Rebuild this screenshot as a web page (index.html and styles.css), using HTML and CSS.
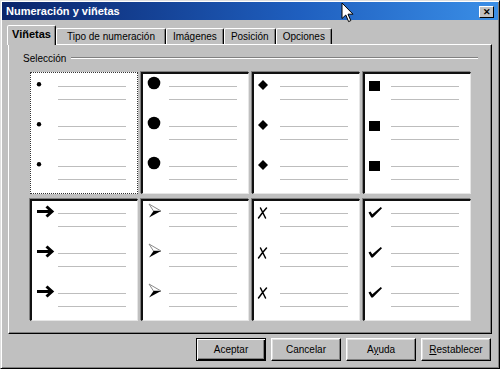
FILE: index.html
```html
<!doctype html>
<html>
<head>
	<title>Numeración y viñetas</title>
	<meta charset="utf-8">
	<link rel="stylesheet" href="styles.css">
</head>
<body>
	<!-- Symbole fuer die Aufzaehlungszeichen -->
	<svg class="defs" width="0" height="0">
		<symbol id="punto" viewBox="0 0 26 24"><circle cx="7" cy="10.3" r="2.2"/></symbol>
		<symbol id="circulo" viewBox="0 0 26 24"><circle cx="11" cy="9" r="6.3"/></symbol>
		<symbol id="rombo" viewBox="0 0 26 24"><path d="M9 6 L14 11 L9 16 L4 11 Z"/></symbol>
		<symbol id="cuadro" viewBox="0 0 26 24"><rect x="4" y="7" width="11" height="10"/></symbol>
		<symbol id="flecha" viewBox="0 0 26 24"><path d="M5 10.5 H19 M14.5 5.5 L20 10.5 L14.5 15.5" fill="none" stroke="#000" stroke-width="3"/></symbol>
		<symbol id="punta" viewBox="0 0 26 24"><path d="M6 3 L18 10 L10.5 10 Z" fill="#fff" stroke="#8a8a8a" stroke-width="1"/><path d="M10.5 10 L18 10 L6 16.5 Z"/></symbol>
		<symbol id="cruz" viewBox="0 0 26 24"><path d="M6.5 7 Q9 12 11.5 17 M12.5 7 Q8 12 4.5 17" fill="none" stroke="#000" stroke-width="1.5" stroke-linecap="round"/></symbol>
		<symbol id="visto" viewBox="0 0 26 24"><path d="M3.5 11.5 L5.5 10.5 L7.3 13.2 L15.8 6 L17 7.3 L7.8 16.5 L6.3 16.5 Z"/></symbol>
	</svg>

	<div class="ventana">
		<div class="titulo">
			<span>Numeración y viñetas</span>
			<span class="cerrar">&#x2715;</span>
		</div>

		<div class="pestanas">
			<div class="pestana activa">Viñetas</div>
			<div class="pestana ancha">Tipo de numeración</div>
			<div class="pestana">Imágenes</div>
			<div class="pestana">Posición</div>
			<div class="pestana">Opciones</div>
		</div>

		<div class="panel">
			<div class="grupo">
				<span>Selección</span>
				<div class="linea"></div>
			</div>

			<div class="rejilla">
				<div class="celda sel">
					<div class="item"><svg class="marca"><use href="#punto"/></svg><div class="lineas"><i></i><i></i></div></div>
					<div class="item"><svg class="marca"><use href="#punto"/></svg><div class="lineas"><i></i><i></i></div></div>
					<div class="item"><svg class="marca"><use href="#punto"/></svg><div class="lineas"><i></i><i></i></div></div>
				</div>
				<div class="celda">
					<div class="item"><svg class="marca"><use href="#circulo"/></svg><div class="lineas"><i></i><i></i></div></div>
					<div class="item"><svg class="marca"><use href="#circulo"/></svg><div class="lineas"><i></i><i></i></div></div>
					<div class="item"><svg class="marca"><use href="#circulo"/></svg><div class="lineas"><i></i><i></i></div></div>
				</div>
				<div class="celda">
					<div class="item"><svg class="marca"><use href="#rombo"/></svg><div class="lineas"><i></i><i></i></div></div>
					<div class="item"><svg class="marca"><use href="#rombo"/></svg><div class="lineas"><i></i><i></i></div></div>
					<div class="item"><svg class="marca"><use href="#rombo"/></svg><div class="lineas"><i></i><i></i></div></div>
				</div>
				<div class="celda">
					<div class="item"><svg class="marca"><use href="#cuadro"/></svg><div class="lineas"><i></i><i></i></div></div>
					<div class="item"><svg class="marca"><use href="#cuadro"/></svg><div class="lineas"><i></i><i></i></div></div>
					<div class="item"><svg class="marca"><use href="#cuadro"/></svg><div class="lineas"><i></i><i></i></div></div>
				</div>
				<div class="celda">
					<div class="item"><svg class="marca"><use href="#flecha"/></svg><div class="lineas"><i></i><i></i></div></div>
					<div class="item"><svg class="marca"><use href="#flecha"/></svg><div class="lineas"><i></i><i></i></div></div>
					<div class="item"><svg class="marca"><use href="#flecha"/></svg><div class="lineas"><i></i><i></i></div></div>
				</div>
				<div class="celda">
					<div class="item"><svg class="marca"><use href="#punta"/></svg><div class="lineas"><i></i><i></i></div></div>
					<div class="item"><svg class="marca"><use href="#punta"/></svg><div class="lineas"><i></i><i></i></div></div>
					<div class="item"><svg class="marca"><use href="#punta"/></svg><div class="lineas"><i></i><i></i></div></div>
				</div>
				<div class="celda">
					<div class="item"><svg class="marca"><use href="#cruz"/></svg><div class="lineas"><i></i><i></i></div></div>
					<div class="item"><svg class="marca"><use href="#cruz"/></svg><div class="lineas"><i></i><i></i></div></div>
					<div class="item"><svg class="marca"><use href="#cruz"/></svg><div class="lineas"><i></i><i></i></div></div>
				</div>
				<div class="celda">
					<div class="item"><svg class="marca"><use href="#visto"/></svg><div class="lineas"><i></i><i></i></div></div>
					<div class="item"><svg class="marca"><use href="#visto"/></svg><div class="lineas"><i></i><i></i></div></div>
					<div class="item"><svg class="marca"><use href="#visto"/></svg><div class="lineas"><i></i><i></i></div></div>
				</div>
			</div>
		</div>

		<div class="botones">
			<button class="boton defecto">Aceptar</button>
			<button class="boton">Cancelar</button>
			<button class="boton">A<u>y</u>uda</button>
			<button class="boton"><u>R</u>establecer</button>
		</div>

		<!-- Mauszeiger -->
		<svg class="cursor" width="13" height="21" viewBox="0 0 13 21">
			<path d="M1 1 L1 16.5 L4.8 13 L7.6 19.6 L9.8 18.6 L7 12.2 L12 12.2 Z" fill="#fff" stroke="#000" stroke-width="1"/>
		</svg>
	</div>
</body>
</html>
```

FILE: styles.css
```css
	body {
		margin: 0;
		font-family: "Liberation Sans", Arial, sans-serif;
		font-size: 10px;
		color: #000;
	}
	.defs {
		position: absolute;
	}
	.ventana {
		position: relative;
		box-sizing: border-box;
		width: 500px;
		height: 369px;
		padding: 1px;
		background: #c0c0c0;
		border: 1px solid;
		border-color: #dfdfdf #000 #000 #dfdfdf;
		box-shadow: inset 1px 1px #fff, inset -1px -1px #808080;
		display: flex;
		flex-direction: column;
	}
	.titulo {
		height: 18px;
		padding: 0 4px;
		display: flex;
		align-items: center;
		justify-content: space-between;
		background: linear-gradient(to right, #0a246a, #1f5fbf 60%, #3a8ee6);
		color: #fff;
		font-size: 11px;
		font-weight: bold;
	}
	.cerrar {
		box-sizing: border-box;
		width: 15px;
		height: 12px;
		margin-top: 1px;
		background: #c0c0c0;
		color: #000;
		font-size: 9px;
		line-height: 10px;
		text-align: center;
		border: 1px solid;
		border-color: #fff #000 #000 #fff;
	}
	.pestanas {
		display: flex;
		align-items: flex-end;
		margin: 5px 0 0 5px;
	}
	.pestana {
		box-sizing: border-box;
		height: 16px;
		padding: 0 6px;
		line-height: 15px;
		border: 1px solid;
		border-bottom: none;
		border-color: #fff #000 transparent #fff;
		box-shadow: inset -1px 0 #808080;
		border-radius: 2px 2px 0 0;
		white-space: nowrap;
	}
	.pestana.ancha {
		padding: 0 10px;
	}
	.pestana.activa {
		position: relative;
		z-index: 1;
		height: 20px;
		margin-bottom: -1px;
		padding: 0 4px;
		background: #c0c0c0;
		font-size: 11px;
		font-weight: bold;
		line-height: 17px;
	}
	.panel {
		box-sizing: border-box;
		height: 290px;
		margin: 0 6px;
		padding: 7px 13px 0 14px;
		border: 1px solid;
		border-color: #fff #000 #000 #fff;
		box-shadow: inset -1px -1px #808080;
	}
	.grupo {
		display: flex;
		align-items: center;
		gap: 5px;
		height: 12px;
	}
	.linea {
		flex: 1;
		border-top: 1px solid #808080;
		border-bottom: 1px solid #fff;
	}
	.rejilla {
		display: grid;
		grid-template-columns: repeat(4, 108px);
		grid-auto-rows: 122px;
		column-gap: 3px;
		row-gap: 5px;
		margin: 8px 0 0 7px;
	}
	.celda {
		box-sizing: border-box;
		overflow: hidden;
		background: #fff;
		border-style: solid;
		border-width: 2px 1px 1px 2px;
		border-color: #111 #e6e6e6 #e6e6e6 #111;
		box-shadow: -1px -1px 0 #808080;
	}
	.celda.sel {
		border: 1px dotted #333;
		padding: 1px 0 0 1px;
		box-shadow: none;
	}
	.item {
		display: flex;
		height: 40px;
	}
	.marca {
		flex: none;
		width: 26px;
		height: 24px;
	}
	.lineas {
		width: 68px;
		padding-top: 12px;
	}
	.lineas i {
		display: block;
		height: 1px;
		background: #bdbdbd;
	}
	.lineas i + i {
		margin-top: 12px;
	}
	.botones {
		display: flex;
		justify-content: flex-end;
		gap: 5px;
		margin: 4px 7px 0 0;
	}
	.boton {
		box-sizing: border-box;
		width: 70px;
		height: 23px;
		padding: 0;
		font-family: "Liberation Sans", Arial, sans-serif;
		font-size: 10px;
		color: #000;
		background: #c0c0c0;
		border: 1px solid;
		border-color: #fff #000 #000 #fff;
		box-shadow: inset -1px -1px #808080, inset 1px 1px #dfdfdf;
	}
	.boton.defecto {
		border: 1px solid #000;
		box-shadow: inset 1px 1px #fff, inset -1px -1px #000, inset -2px -2px #808080;
	}
	.cursor {
		position: absolute;
		left: 340px;
		top: 1px;
	}
```
